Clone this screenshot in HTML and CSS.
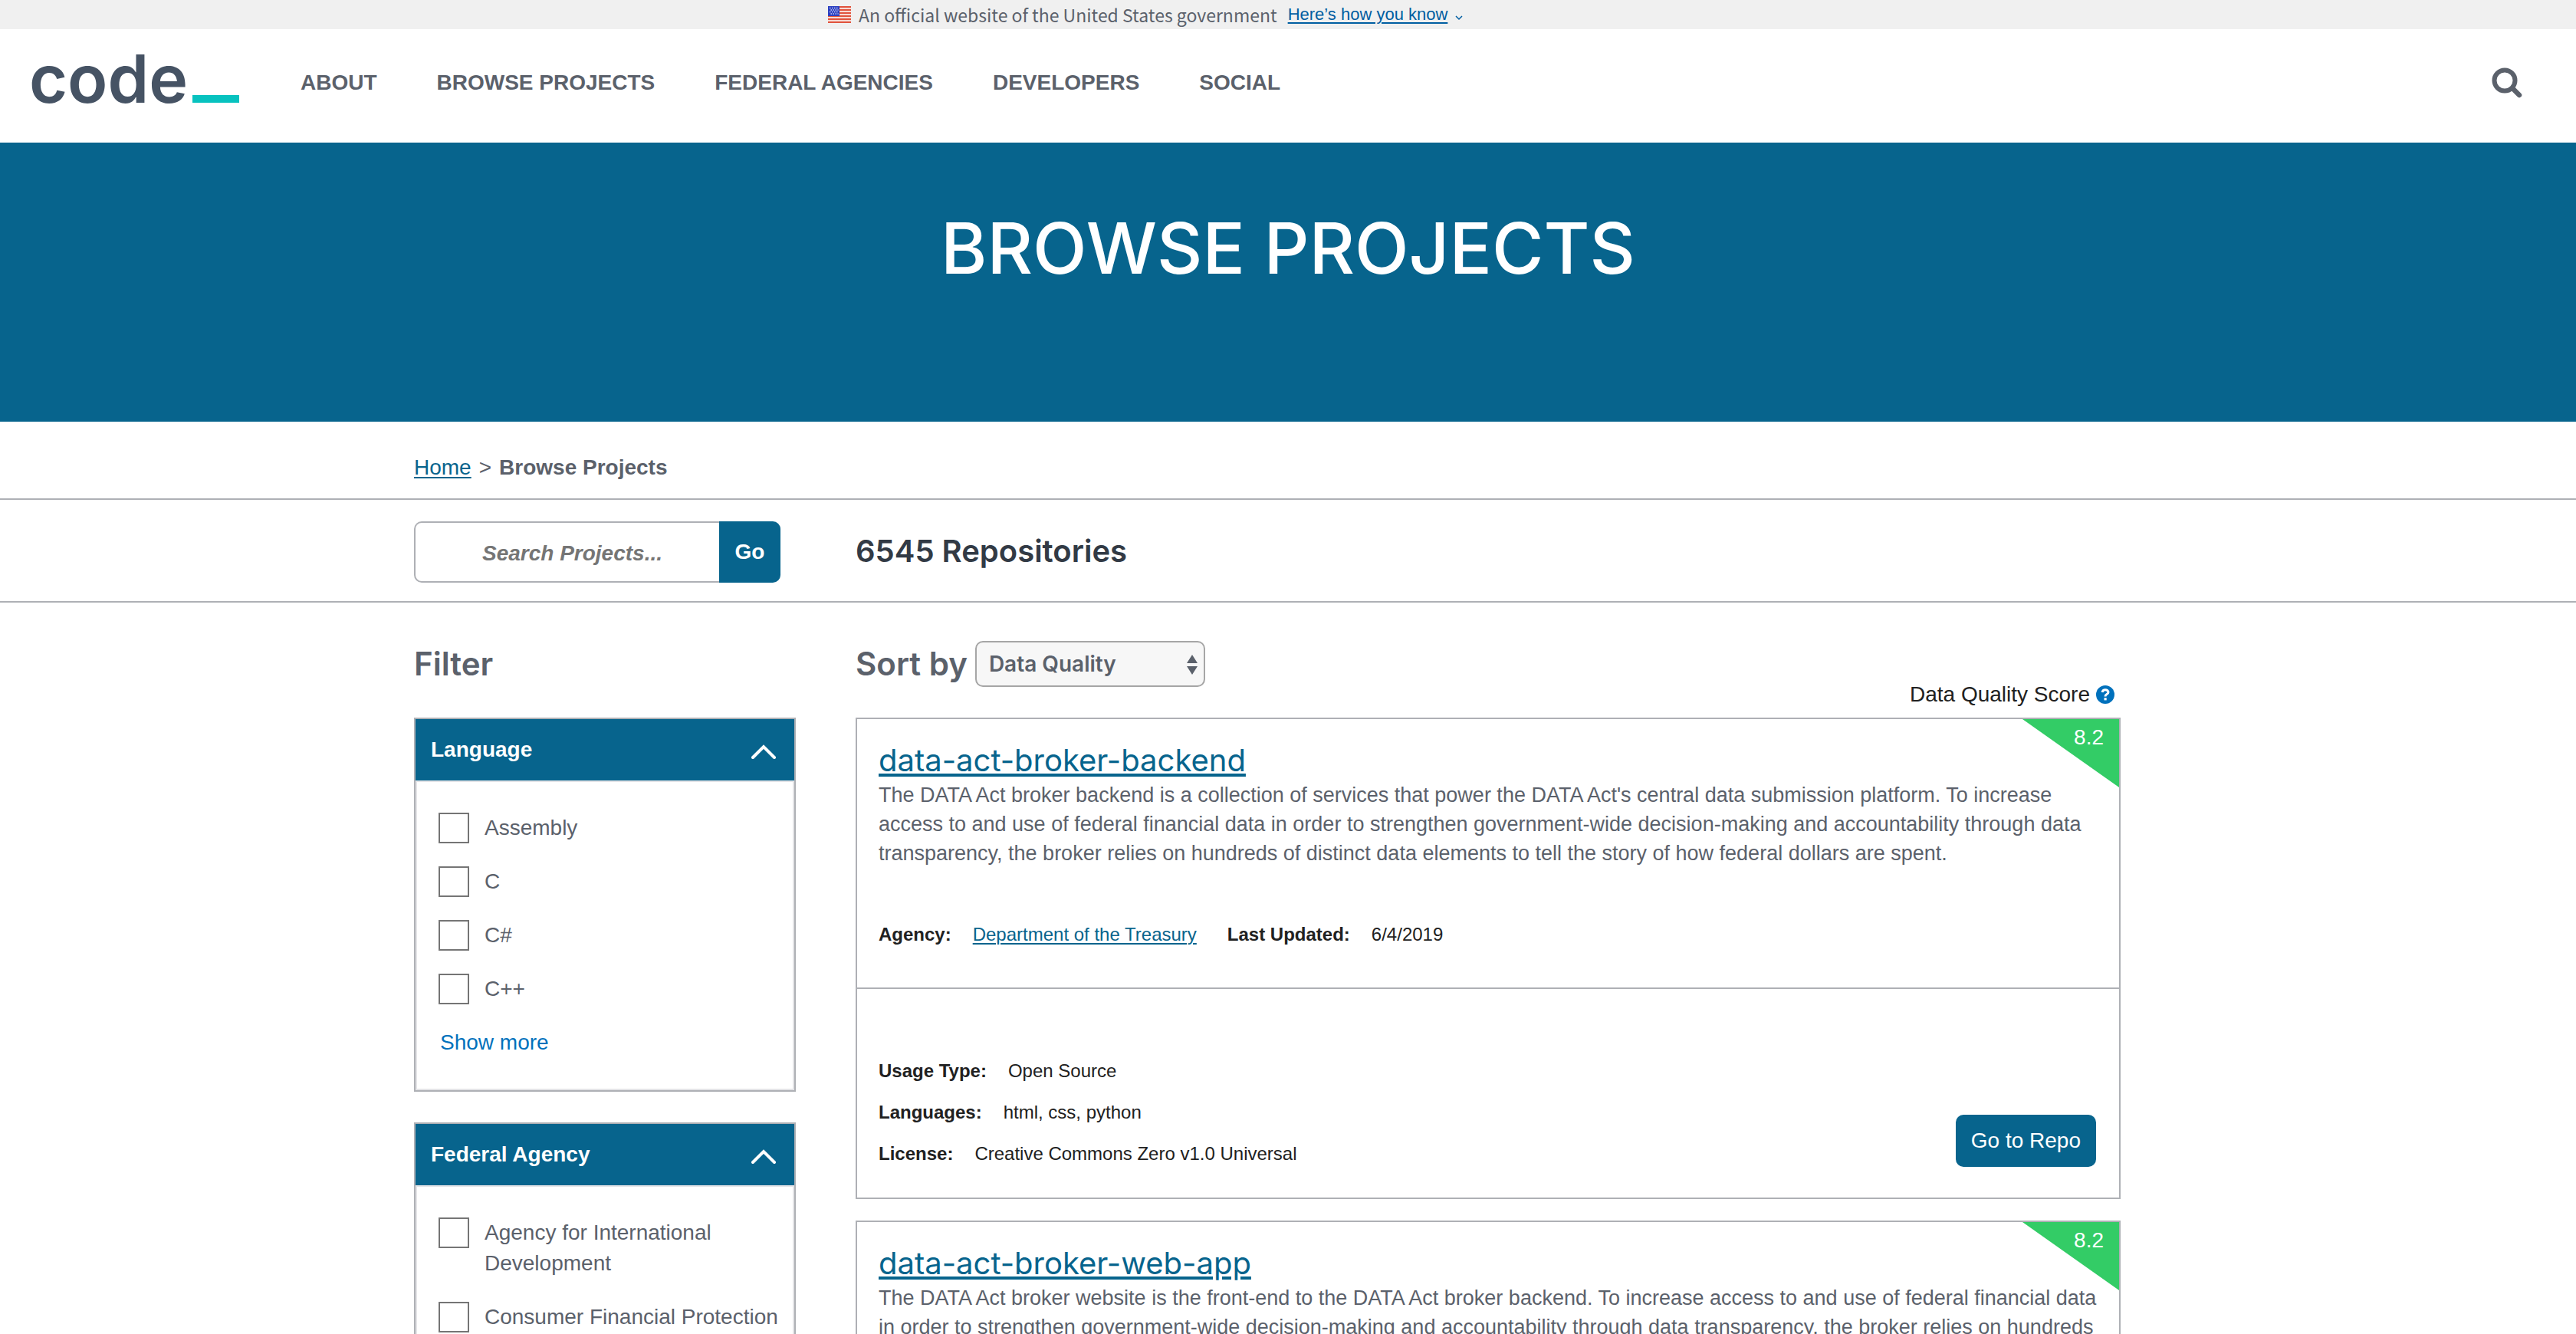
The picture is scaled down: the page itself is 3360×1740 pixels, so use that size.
FILE: index.html
```html
<!DOCTYPE html>
<html lang="en">
<head>
<meta charset="utf-8">
<title>Browse Projects</title>
<link rel="stylesheet" href="styles.css">
</head>
<body>
<div class="banner">
  <div class="banner-inner">
    <svg class="flag" viewBox="0 0 30 22" aria-hidden="true">
      <rect width="30" height="22" fill="#f8d9d2"/>
      <path d="M0 1h30M0 5h30M0 9h30M0 13h30M0 17h30M0 21h30" stroke="#e0533d" stroke-width="2"/>
      <rect width="15" height="13" fill="#2b3fc0"/>
      <path d="M2 2.500h12M3.500 5h10M2 7.500h12M3.500 10h10" stroke="#c9d0f5" stroke-width="1.500" stroke-dasharray="1.500 1.500"/>
    </svg>
    <span class="banner-text">An official website of the United States government</span>
    <a class="banner-link" href="#">Here’s how you know</a>
    <svg class="banner-caret" viewBox="0 0 10 8" aria-hidden="true"><path d="M1 2l4 4 4-4" fill="none" stroke="#005ea2" stroke-width="1.500"/></svg>
  </div>
</div>
<header class="header">
  <a class="logo" href="#">code<span class="logo-bar"></span></a>
  <nav class="nav">
    <a href="#">ABOUT</a>
    <a href="#">BROWSE PROJECTS</a>
    <a href="#">FEDERAL AGENCIES</a>
    <a href="#">DEVELOPERS</a>
    <a href="#">SOCIAL</a>
  </nav>
  <button class="search-toggle" type="button" aria-label="Search">
    <svg viewBox="0 0 40 40" aria-hidden="true"><circle cx="17" cy="17" r="13.500" fill="none" stroke="#5b616b" stroke-width="6"/><path d="M27 27l9 9" stroke="#5b616b" stroke-width="6.500" stroke-linecap="round"/></svg>
  </button>
</header>
<section class="hero"><h1>BROWSE PROJECTS</h1></section>
<div class="strip breadcrumb-strip">
  <nav class="container breadcrumb"><a href="#">Home</a><span>&gt;</span><strong>Browse Projects</strong></nav>
</div>
<div class="strip toolbar-strip">
  <div class="container columns">
    <form class="search">
      <input type="search" placeholder="Search Projects..." aria-label="Search Projects">
      <button type="submit">Go</button>
    </form>
    <h2 class="count">6545 Repositories</h2>
  </div>
</div>
<main class="container columns main">
  <aside>
    <h2 class="heading filter-heading">Filter</h2>
    <section class="filter">
      <button class="filter-head" type="button">Language<svg viewBox="0 0 32 20" aria-hidden="true"><path d="M2 18L16 4l14 14" fill="none" stroke="#fff" stroke-width="4" stroke-linecap="round"/></svg></button>
      <div class="filter-body">
        <label class="option"><input type="checkbox"><span>Assembly</span></label>
        <label class="option"><input type="checkbox"><span>C</span></label>
        <label class="option"><input type="checkbox"><span>C#</span></label>
        <label class="option"><input type="checkbox"><span>C++</span></label>
        <button class="more" type="button">Show more</button>
      </div>
    </section>
    <section class="filter">
      <button class="filter-head" type="button">Federal Agency<svg viewBox="0 0 32 20" aria-hidden="true"><path d="M2 18L16 4l14 14" fill="none" stroke="#fff" stroke-width="4" stroke-linecap="round"/></svg></button>
      <div class="filter-body">
        <label class="option"><input type="checkbox"><span>Agency for International Development</span></label>
        <label class="option"><input type="checkbox"><span>Consumer Financial Protection</span></label>
      </div>
    </section>
  </aside>
  <div class="results">
    <div class="results-head">
      <div class="sort">
        <label class="heading" for="sort">Sort by</label>
        <div class="select">
          <select id="sort"><option>Data Quality</option></select>
          <svg viewBox="0 0 14 26" aria-hidden="true"><path d="M7 0l7 11H0zM7 26L0 15h14z" fill="#5b616b"/></svg>
        </div>
      </div>
      <div class="quality">Data Quality Score
        <svg viewBox="0 0 24 24" role="img" aria-label="Help"><circle cx="12" cy="12" r="12" fill="#0071bc"/><path d="M8 9q.8-3.200 4-3.200t4 2.900q0 1.700-2 2.800t-2 2.900" fill="none" stroke="#fff" stroke-width="3"/><rect x="10.500" y="16.200" width="3.200" height="3.200" fill="#fff"/></svg>
      </div>
    </div>
    <article class="card">
      <div class="score">8.2</div>
      <div class="card-top">
        <h3><a href="#">data-act-broker-backend</a></h3>
        <p class="desc">The DATA Act broker backend is a collection of services that power the DATA Act's central data submission platform. To increase access to and use of federal financial data in order to strengthen government-wide decision-making and accountability through data transparency, the broker relies on hundreds of distinct data elements to tell the story of how federal dollars are spent.</p>
        <dl class="meta">
          <div><dt>Agency:</dt><dd><a href="#">Department of the Treasury</a></dd></div>
          <div><dt>Last Updated:</dt><dd>6/4/2019</dd></div>
        </dl>
      </div>
      <div class="card-bottom">
        <dl class="facts">
          <div><dt>Usage Type:</dt><dd>Open Source</dd></div>
          <div><dt>Languages:</dt><dd>html, css, python</dd></div>
          <div><dt>License:</dt><dd>Creative Commons Zero v1.0 Universal</dd></div>
        </dl>
        <a class="repo" href="#">Go to Repo</a>
      </div>
    </article>
    <article class="card">
      <div class="score">8.2</div>
      <div class="card-top">
        <h3><a href="#">data-act-broker-web-app</a></h3>
        <p class="desc">The DATA Act broker website is the front-end to the DATA Act broker backend. To increase access to and use of federal financial data in order to strengthen government-wide decision-making and accountability through data transparency, the broker relies on hundreds</p>
      </div>
    </article>
  </div>
</main>
</body>
</html>
```
FILE: styles.css
```css
* { box-sizing: border-box; }

body {
  margin: 0;
  height: 100vh;
  overflow: hidden;
  background: #fff;
  color: #5b616b;
  font: 28px/40px "Liberation Sans", Arial, sans-serif;
}

h1, h2, h3, p, dl, dd { margin: 0; }
a { color: #07648d; text-underline-offset: 3px; text-decoration-thickness: 2px; }
button { border: 0; padding: 0; font: inherit; cursor: pointer; }
svg { display: block; flex: none; }

/* Government banner */
.banner { background: #f0f0f0; }
.banner-inner {
  max-width: 1200px;
  height: 38px;
  margin: 0 auto;
  display: flex;
  align-items: center;
}
.flag { width: 30px; height: 22px; margin-right: 10px; }
.banner-text {
  margin-right: 14px;
  font: 23px/38px "Noto Sans CJK SC", "Noto Sans", sans-serif;
  white-space: nowrap;
}
.banner-link { margin-right: 10px; color: #005ea2; font-size: 22px; line-height: 38px; }
.banner-caret { width: 10px; height: 8px; margin-top: 8px; }

/* Header */
.header {
  display: flex;
  align-items: center;
  height: 148px;
  padding: 0 70px 8px 38px;
}
.logo {
  padding-bottom: 10px;
  color: #465364;
  font: 600 86px/84px Inter, sans-serif;
  text-decoration: none;
}
.logo-bar { display: inline-block; width: 61px; height: 10px; margin-left: 6px; background: #07c2bf; }
.nav { display: flex; gap: 78px; margin-left: 80px; }
.nav a { color: #5b616b; font-weight: bold; text-decoration: none; }
.search-toggle { margin-left: auto; background: none; }
.search-toggle svg { width: 40px; height: 40px; }

/* Page title */
.hero { padding: 88px 0 176px; background: #07648d; color: #fff; text-align: center; }
.hero h1 { font: 500 92px/100px Inter, sans-serif; }

.container { max-width: 2280px; margin: 0 auto; padding-right: 54px; }
.columns { display: grid; grid-template-columns: 498px 1fr; column-gap: 78px; }
.strip { border-bottom: 2px solid #aeb0b5; }
.breadcrumb-strip { padding: 40px 0 20px; }
.breadcrumb { display: flex; gap: 10px; }
.toolbar-strip { padding: 28px 0 24px; }

.search { display: flex; width: 478px; height: 80px; }
.search input {
  flex: 1;
  min-width: 0;
  padding: 4px 0 0 36px;
  border: 2px solid #aeb0b5;
  border-right: 0;
  border-radius: 10px 0 0 10px;
  background: #fff;
  font: italic bold 28px/40px "Liberation Sans", Arial, sans-serif;
  text-align: center;
  appearance: none;
}
.search input::placeholder { color: #757575; }
.search button { width: 80px; border-radius: 0 10px 10px 0; background: #07648d; color: #fff; font-weight: bold; }
.count { color: #323a45; font: 600 40px/78px Inter, sans-serif; }

/* Filters */
.main { padding-top: 50px; }
.heading { font: 600 42px/60px Inter, sans-serif; }
.filter-heading { margin-bottom: 40px; }
.filter { margin-bottom: 40px; border: 2px solid #aeb0b5; }
.filter-head {
  display: flex;
  align-items: center;
  justify-content: space-between;
  width: 100%;
  height: 80px;
  padding: 0 24px 0 20px;
  background: #07648d;
  color: #fff;
  font-weight: bold;
}
.filter-head svg { width: 32px; height: 20px; margin-top: 4px; }
.filter-body {
  display: flex;
  flex-direction: column;
  align-items: flex-start;
  gap: 30px;
  padding: 40px 0 40px 28px;
  border: 2px solid #e4e4e7;
}
.option { display: flex; gap: 20px; }
.option input {
  flex: none;
  width: 40px;
  height: 40px;
  margin: 0;
  border: 2px solid #757575;
  background: #fff;
  appearance: none;
}
.more { margin-left: 2px; background: none; color: #0071bc; }

/* Results */
.results-head { display: flex; justify-content: space-between; height: 90px; margin-bottom: 10px; }
.sort { display: flex; gap: 10px; height: 60px; }
.select { position: relative; }
.select select {
  width: 300px;
  height: 60px;
  padding: 0 16px;
  border: 2px solid #a6a6a6;
  border-radius: 10px;
  background: #f7f7f7;
  color: #5b616b;
  font: 600 28px/40px Inter, sans-serif;
  appearance: none;
}
.select svg { position: absolute; top: 18px; right: 10px; width: 14px; height: 26px; pointer-events: none; }
.quality { display: flex; align-items: center; align-self: flex-end; gap: 8px; padding-right: 8px; color: #212121; }
.quality svg { width: 24px; height: 24px; }

.card { position: relative; margin-bottom: 28px; border: 2px solid #aeb0b5; }
.score {
  position: absolute;
  top: 0;
  right: 0;
  width: 126px;
  height: 89px;
  padding: 4px 20px 0 0;
  background: #33cc66;
  clip-path: polygon(0 0, 100% 0, 100% 100%);
  color: #fff;
  text-align: right;
}
.card-top { padding: 30px 28px 52px; }
.card h3 { margin-bottom: 2px; font: 400 40px/48px Inter, sans-serif; }
.card h3 a { text-decoration-thickness: 4px; text-underline-offset: 3px; }
.desc { font-size: 27px; line-height: 38px; }
.meta, .facts { color: #212121; font-size: 24px; line-height: 34px; }
.meta { display: flex; gap: 40px; margin-top: 70px; }
.meta div, .facts div { display: flex; gap: 28px; }
dt { font-weight: bold; }
.card-bottom {
  display: flex;
  justify-content: space-between;
  align-items: flex-end;
  padding: 90px 30px 40px 28px;
  border-top: 2px solid #aeb0b5;
}
.facts { display: flex; flex-direction: column; gap: 20px; }
.repo { padding: 14px 20px; border-radius: 10px; background: #07648d; color: #fff; text-decoration: none; }
```
